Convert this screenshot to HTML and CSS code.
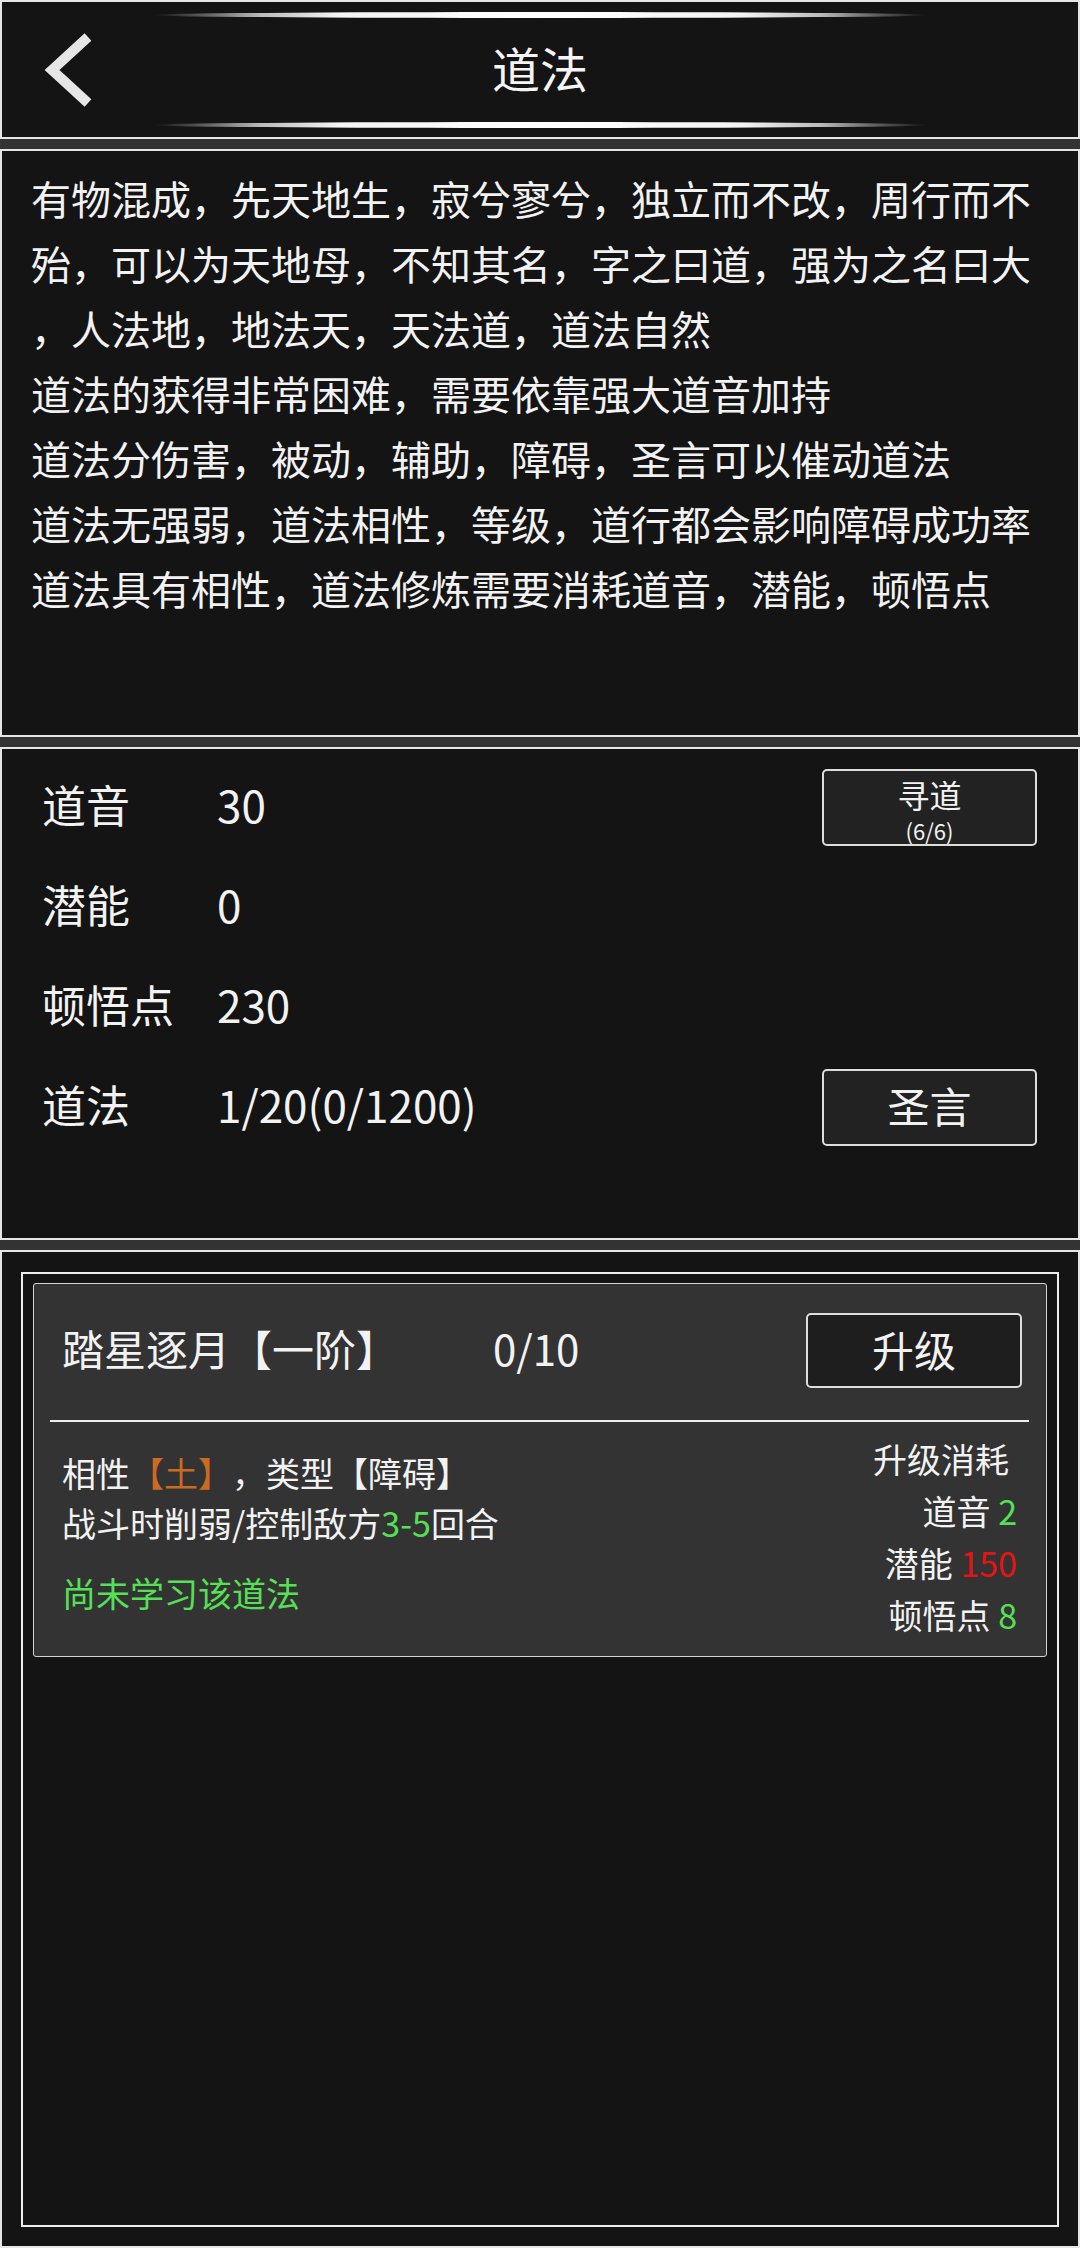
FILE: index.html
```html
<!DOCTYPE html>
<html lang="zh-CN">
<head>
<meta charset="utf-8">
<title>道法</title>
<link rel="stylesheet" href="styles.css">
</head>
<body>
  <header class="panel header">
    <div class="glow glow-top"></div>
    <div class="header-row">
      <svg class="back" viewBox="0 0 56 74" aria-hidden="true">
        <polyline points="48,4 12,37 48,70" fill="none" stroke="#e6e6e6" stroke-width="10" stroke-linecap="butt" stroke-linejoin="miter"/>
      </svg>
      <div class="title">道法</div>
      <div></div>
    </div>
    <div class="glow glow-bottom"></div>
  </header>

  <section class="panel intro">
    有物混成，先天地生，寂兮寥兮，独立而不改，周行而不<br>
    殆，可以为天地母，不知其名，字之曰道，强为之名曰大<br>
    ，人法地，地法天，天法道，道法自然<br>
    道法的获得非常困难，需要依靠强大道音加持<br>
    道法分伤害，被动，辅助，障碍，圣言可以催动道法<br>
    道法无强弱，道法相性，等级，道行都会影响障碍成功率<br>
    道法具有相性，道法修炼需要消耗道音，潜能，顿悟点
  </section>

  <section class="panel stats">
    <div class="row">
      <span class="label">道音</span>
      <span class="value">30</span>
      <div class="btn btn-seek">
        <span class="seek-main">寻道</span>
        <span class="seek-sub">(6/6)</span>
      </div>
    </div>
    <div class="row">
      <span class="label">潜能</span>
      <span class="value">0</span>
    </div>
    <div class="row">
      <span class="label">顿悟点</span>
      <span class="value">230</span>
    </div>
    <div class="row">
      <span class="label">道法</span>
      <span class="value">1/20(0/1200)</span>
      <div class="btn btn-word">圣言</div>
    </div>
  </section>

  <section class="panel bottom">
    <div class="frame">
      <div class="card">
        <div class="card-head">
          <span class="card-title">踏星逐月【一阶】</span>
          <span class="count">0/10</span>
          <div class="up-btn">升级</div>
        </div>
        <div class="divider"></div>
        <div class="card-body">
          <div class="info">
            <div>相性<span class="orange">【土】</span>，类型【障碍】</div>
            <div>战斗时削弱/控制敌方<span class="green">3-5</span>回合</div>
            <div class="note green">尚未学习该道法</div>
          </div>
          <div class="cost">
            <div class="cost-title">升级消耗</div>
            <div>道音 <span class="green">2</span></div>
            <div>潜能 <span class="red">150</span></div>
            <div>顿悟点 <span class="green">8</span></div>
          </div>
        </div>
      </div>
    </div>
  </section>
</body>
</html>
```

FILE: styles.css
```css
* {
  box-sizing: border-box;
  margin: 0;
  padding: 0;
}

html, body {
  width: 1080px;
  height: 2248px;
}

body {
  background: #333333;
  font-family: "Noto Sans CJK SC", "Noto Sans", sans-serif;
  color: #f2f2f2;
  display: flex;
  flex-direction: column;
  gap: 10px;
  overflow: hidden;
  text-spacing-trim: space-all;
}

.panel {
  background: #141414;
  border: 2px solid #e6e6e6;
}

/* header */
.header {
  height: 139px;
  flex: none;
  display: flex;
  flex-direction: column;
}

.glow {
  width: 777px;
  height: 6px;
  align-self: center;
  border-radius: 50%;
  background: linear-gradient(90deg,
    rgba(90, 90, 90, 0) 0%,
    #555 6%,
    #bbb 14%,
    #f4f4f4 24%,
    #ffffff 50%,
    #f4f4f4 76%,
    #bbb 86%,
    #555 94%,
    rgba(90, 90, 90, 0) 100%);
}

.glow-top {
  margin-top: 10px;
}

.glow-bottom {
  margin-bottom: 9px;
}

.header-row {
  flex: 1;
  display: grid;
  grid-template-columns: 1fr auto 1fr;
  align-items: center;
}

.back {
  width: 56px;
  height: 74px;
  margin-left: 38px;
  display: block;
}

.title {
  font-size: 48px;
  line-height: 1;
  padding-bottom: 7px;
  color: #f4f4f4;
}

/* intro text */
.intro {
  height: 588px;
  flex: none;
  padding: 15px 29px;
  font-size: 40px;
  line-height: 65px;
  white-space: nowrap;
  color: #f2f2f2;
}

/* stats */
.stats {
  height: 493px;
  flex: none;
  padding: 8px 41px 0 40px;
}

.row {
  height: 100px;
  display: flex;
  align-items: center;
  font-size: 44px;
  line-height: 1;
}

.label {
  width: 175px;
  padding-bottom: 6px;
}

.value {
  flex: 1;
  padding-bottom: 6px;
}

.btn {
  width: 215px;
  height: 77px;
  background: #222222;
  border: 2px solid #dddddd;
  border-radius: 5px;
  display: flex;
  flex-direction: column;
  align-items: center;
  justify-content: center;
  color: #f2f2f2;
}

.btn-seek {
  justify-content: flex-start;
  padding-top: 7px;
}

.seek-main {
  font-size: 32px;
  line-height: 32px;
}

.seek-sub {
  font-size: 22px;
  line-height: 24px;
  margin-top: 8px;
}

.btn-word {
  font-size: 42px;
  padding-bottom: 4px;
}

/* bottom list */
.bottom {
  flex: 1;
  padding: 20px 19px 19px;
}

.frame {
  height: 100%;
  border: 2px solid #eeeeee;
  padding: 9px 10px;
}

.card {
  height: 374px;
  background: #333333;
  border: 1px solid #d4d4d4;
  border-radius: 3px;
}

.card-head {
  display: flex;
  align-items: center;
  padding: 29px 24px 32px 28px;
  font-size: 42px;
  line-height: 1;
}

.card-title {
  width: 431px;
  padding-bottom: 5px;
}

.count {
  flex: 1;
  padding-bottom: 5px;
}

.up-btn {
  width: 216px;
  height: 75px;
  background: #1e1e1e;
  border: 2px solid #dddddd;
  border-radius: 5px;
  display: flex;
  align-items: center;
  justify-content: center;
  font-size: 42px;
  padding-bottom: 4px;
}

.divider {
  height: 2px;
  background: #eeeeee;
  margin: 0 17px 0 16px;
}

.card-body {
  display: flex;
  justify-content: space-between;
  padding: 0 29px 0 28px;
  font-size: 34px;
}

.info {
  padding-top: 26px;
  line-height: 50px;
}

.note {
  margin-top: 20px;
}

.cost {
  padding-top: 11px;
  line-height: 52px;
  text-align: right;
}

.cost-title {
  margin-right: 8px;
}

.green {
  color: #55e055;
}

.red {
  color: #e51414;
}

.orange {
  color: #cc6a22;
}
```
